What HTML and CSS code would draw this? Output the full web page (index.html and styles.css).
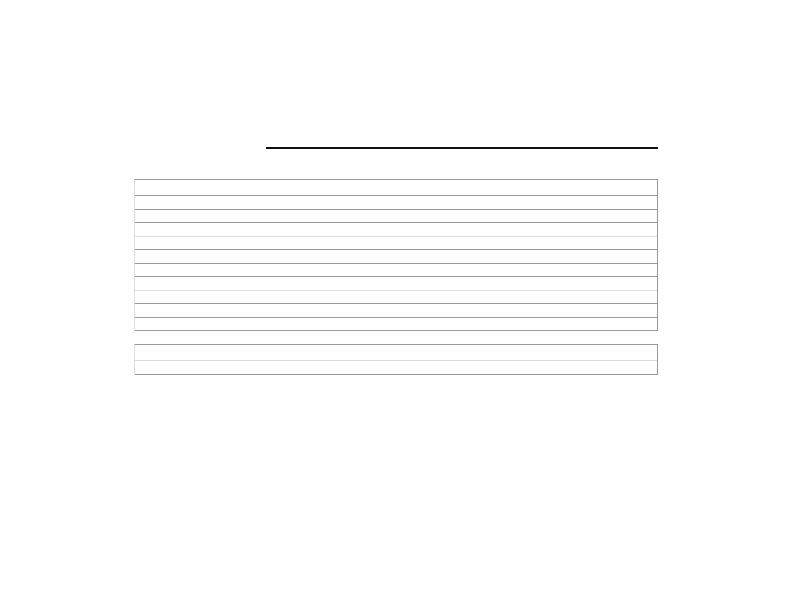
FILE: index.html
```html
<!DOCTYPE html>
<html>
<head>
<meta charset="utf-8">
<link rel="stylesheet" href="styles.css">
</head>
<body>
<div class="page">
  <div class="rule"></div>
  <div class="grid">
    <div class="row first"></div>
    <div class="row"></div>
    <div class="row"></div>
    <div class="row light"></div>
    <div class="row"></div>
    <div class="row"></div>
    <div class="row"></div>
    <div class="row light"></div>
    <div class="row"></div>
    <div class="row"></div>
    <div class="row"></div>
  </div>
  <div class="grid second">
    <div class="row first light"></div>
    <div class="row"></div>
  </div>
</div>
</body>
</html>
```
FILE: styles.css
```css
html, body {
  margin: 0;
  padding: 0;
  background: #ffffff;
  font-family: "Liberation Sans", Arial, sans-serif;
}
.page {
  width: 524px;
  margin-left: 134px;
  padding-top: 147px;
}
.rule {
  margin-left: 132px;
  width: 392px;
  height: 2px;
  background: #111111;
}
.grid {
  margin-top: 30px;
  border-top: 1px solid #999999;
  border-left: 1px solid #dddddd;
  border-right: 1px solid #999999;
  display: flex;
  flex-direction: column;
}
.grid.second {
  margin-top: 13px;
}
.row {
  box-sizing: border-box;
  height: 13.5px;
  border-bottom: 1px solid #999999;
}
.row.first {
  height: 16px;
}
.row.light {
  border-bottom-color: #dddddd;
}
.second .row {
  height: 14px;
}
.second .row.first {
  height: 16px;
}
```
